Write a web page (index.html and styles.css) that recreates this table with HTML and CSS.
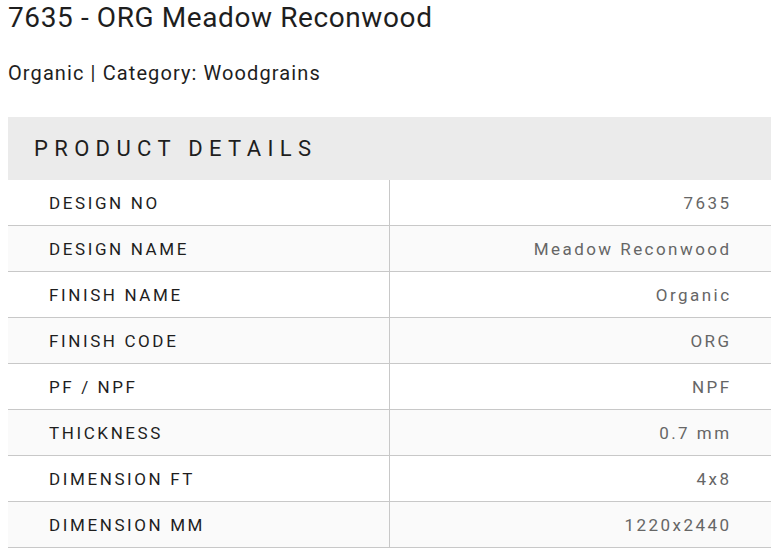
FILE: index.html
```html
<!DOCTYPE html>
<html>
<head>
<meta charset="utf-8">
<link rel="stylesheet" href="styles.css">
</head>
<body>
<div class="page">
  <h1 class="title">7635 - ORG Meadow Reconwood</h1>
  <p class="subtitle">Organic | Category: Woodgrains</p>
  <section class="details">
    <h2 class="details-head">PRODUCT DETAILS</h2>
    <div class="rows">
      <div class="row"><div class="label">DESIGN NO</div><div class="value">7635</div></div>
      <div class="row"><div class="label">DESIGN NAME</div><div class="value">Meadow Reconwood</div></div>
      <div class="row"><div class="label">FINISH NAME</div><div class="value">Organic</div></div>
      <div class="row"><div class="label">FINISH CODE</div><div class="value">ORG</div></div>
      <div class="row"><div class="label">PF / NPF</div><div class="value">NPF</div></div>
      <div class="row"><div class="label">THICKNESS</div><div class="value">0.7 mm</div></div>
      <div class="row"><div class="label">DIMENSION FT</div><div class="value">4x8</div></div>
      <div class="row"><div class="label">DIMENSION MM</div><div class="value">1220x2440</div></div>
    </div>
  </section>
</div>
</body>
</html>
```
FILE: styles.css
```css
* { box-sizing: border-box; }
body {
  margin: 0;
  padding: 0 0 0 8px;
  background: #fff;
  font-family: Roboto, "Liberation Sans", sans-serif;
  color: #1e1e1e;
}
.page { width: 763px; }
.title {
  margin: 0;
  padding-top: 2px;
  font-size: 28px;
  font-weight: 400;
  line-height: 32px;
  letter-spacing: 0.6px;
}
.subtitle {
  margin: 0;
  padding-top: 27px;
  font-size: 20px;
  line-height: 24px;
  letter-spacing: 1.1px;
}
.details { margin-top: 32px; }
.details-head {
  margin: 0;
  height: 63px;
  background: #ebebeb;
  display: flex;
  align-items: center;
  padding-left: 26px;
  font-size: 22px;
  font-weight: 400;
  letter-spacing: 6.35px;
}
.rows { display: flex; flex-direction: column; }
.row {
  display: flex;
  height: 46px;
  border-bottom: 1px solid #c8c8c8;
}
.row:nth-child(even) { background: #fafafa; }
.label, .value {
  display: flex;
  align-items: center;
  font-size: 17px;
  padding-top: 1px;
}
.label { flex: 0 0 381px; padding-left: 41px; color: #1e1e1e; letter-spacing: 2.6px; }
.value {
  flex: 1 1 auto;
  justify-content: flex-end;
  padding-right: 39.5px;
  color: #666;
  letter-spacing: 2.45px;
  border-left: 1px solid #c8c8c8;
}
```
